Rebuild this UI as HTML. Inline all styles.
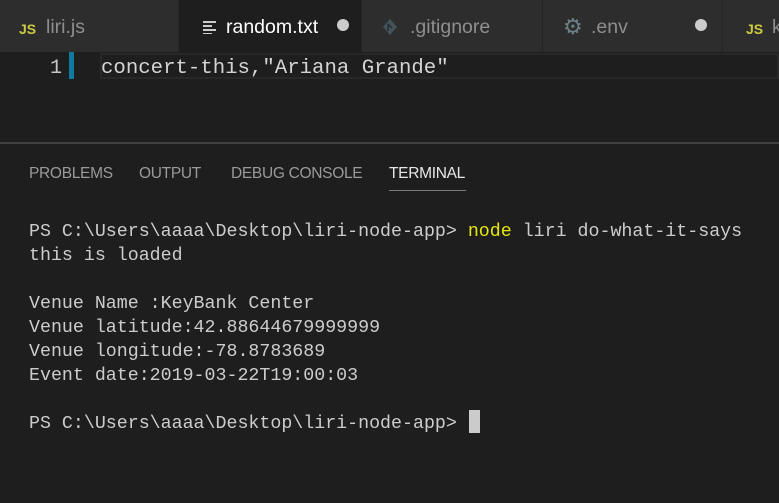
<!DOCTYPE html>
<html><head><meta charset="utf-8"><style>
*{margin:0;padding:0;box-sizing:border-box}
body{width:779px;height:503px;background:#1e1e1e;overflow:hidden;position:relative;font-family:"Liberation Sans",sans-serif}
.tabs{position:absolute;left:0;top:0;width:779px;height:52px;background:#252526}
.tab{position:absolute;top:0;height:52px;background:#2d2d2d;border-right:1px solid #252526;color:#8e8e8e;font-size:19.5px;line-height:54px}
.tab.active{background:#1e1e1e;color:#fff}
.js{position:absolute;color:#cbcb41;font-weight:bold;font-size:14px}
.dot{position:absolute;width:12px;height:12px;border-radius:50%;background:#ccc;top:19px}
.mono{font-family:"Liberation Mono",monospace}
.term{position:absolute;left:29px;top:220px;font-size:18.3px;line-height:24px;color:#ccc;white-space:pre}
.ptab{position:absolute;top:165px;font-size:15.5px;color:#9a9a9a;letter-spacing:-0.3px}
</style></head><body>
<div class="tabs">
 <div class="tab" style="left:0;width:179px"><span class="js" style="left:19px;top:2px">JS</span><span style="position:absolute;left:46px">liri.js</span></div>
 <div class="tab active" style="left:179px;width:183px">
  <svg style="position:absolute;left:24px;top:20px" width="14" height="14"><rect x="0" y="1" width="13" height="2" fill="#ccc"/><rect x="0" y="5" width="9" height="2" fill="#ccc"/><rect x="0" y="9" width="13" height="2" fill="#ccc"/><rect x="0" y="13" width="9" height="1.5" fill="#ccc"/></svg>
  <span style="position:absolute;left:47px">random.txt</span><span class="dot" style="left:158px"></span></div>
 <div class="tab" style="left:362px;width:181px"><svg style="position:absolute;left:20px;top:18px" width="16" height="18"><path d="M8 1 L15 9 L8 17 L1 9Z" fill="#41535b"/><path d="M6 6 L10 10 M6 6 v7" stroke="#2d2d2d" stroke-width="1.5" fill="none"/></svg><span style="position:absolute;left:48px">.gitignore</span></div>
 <div class="tab" style="left:543px;width:180px"><span style="position:absolute;left:20px;top:0px;color:#6d8086;font-size:22px">⚙</span><span style="position:absolute;left:48px">.env</span><span class="dot" style="left:152px"></span></div>
 <div class="tab" style="left:723px;width:70px"><span class="js" style="left:23px;top:2px">JS</span><span style="position:absolute;left:49px">k</span></div>
</div>
<div style="position:absolute;left:69px;top:52px;width:5px;height:27px;background:#0e7aa0"></div>
<div class="mono" style="position:absolute;left:50px;top:56px;font-size:20px;line-height:26px;color:#c6c6c6">1</div>
<div style="position:absolute;left:100px;top:53px;width:679px;height:26px;border:2px solid #282828"></div>
<div class="mono" style="position:absolute;left:101px;top:56px;font-size:20.7px;line-height:26px;color:#d4d4d4;white-space:pre">concert-this,"Ariana Grande"</div>
<div style="position:absolute;left:0;top:142px;width:779px;height:2px;background:#414141"></div>
<div class="ptab" style="left:29px">PROBLEMS</div>
<div class="ptab" style="left:139px">OUTPUT</div>
<div class="ptab" style="left:231px">DEBUG CONSOLE</div>
<div class="ptab" style="left:389px;color:#e7e7e7">TERMINAL</div>
<div style="position:absolute;left:389px;top:190px;width:77px;height:1px;background:#7a7a7a"></div>
<div class="term mono">PS C:\Users\aaaa\Desktop\liri-node-app&gt; <span style="color:#e5e510">node</span> liri do-what-it-says
this is loaded

Venue Name :KeyBank Center
Venue latitude:42.88644679999999
Venue longitude:-78.8783689
Event date:2019-03-22T19:00:03

PS C:\Users\aaaa\Desktop\liri-node-app&gt; </div>
<div style="position:absolute;left:469px;top:410px;width:11px;height:23px;background:#cbcbcb"></div>
</body></html>
